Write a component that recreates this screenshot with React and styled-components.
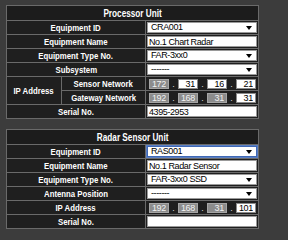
import React from 'react'
import styled, { createGlobalStyle } from 'styled-components'

const GlobalStyle = createGlobalStyle`
  body {
    margin: 0;
    background: #3c3c3c;
    font-family: 'Liberation Sans', Arial, sans-serif;
  }
`

const Page = styled.div`
  display: flex;
  flex-direction: column;
  gap: 10px;
  padding: 5px 6px;
`

const UnitTable = styled.table`
  width: 252px;
  border-collapse: collapse;
  table-layout: fixed;
  background: #1f1f1f;

  td, th {
    border: 1px solid #6a6a6a;
    height: 13px;
    padding: 0;
  }
`

const HeaderCell = styled.th`
  height: 14px !important;
  color: #fff;
  font-size: 10px;
  font-weight: bold;
  text-align: center;
  background: #1c1c1c;
`

const LabelCell = styled.td`
  color: #fff;
  font-size: 9.5px;
  font-weight: bold;
  text-align: center;
  white-space: nowrap;
`

// the screen font is a narrow face; squeeze the regular one to match
const Narrow = styled.span`
  display: inline-block;
  transform: scaleX(0.82);
`

const FieldCell = styled.td`
  padding: 0 1px !important;
`

const SelectBox = styled.div`
  display: flex;
  align-items: center;
  justify-content: space-between;
  box-sizing: border-box;
  height: 11px;
  padding: 0 4px 0 3px;
  background: #fff;
  border: 1px solid ${p => (p.$focused ? '#3f68b5' : '#9a9a9a')};
  box-shadow: ${p => (p.$focused ? '0 0 0 1px #5a7fc4' : 'none')};
  color: #000;
  font-size: 9px;
  line-height: 9px;
  letter-spacing: -0.4px;
`

const Caret = styled.span`
  width: 0;
  height: 0;
  border-left: 3px solid transparent;
  border-right: 3px solid transparent;
  border-top: 4px solid #000;
`

const TextBox = styled.input`
  display: block;
  box-sizing: border-box;
  width: 100%;
  height: 11px;
  margin: 0;
  padding: 0 1px;
  border: 1px solid #9a9a9a;
  background: #fff;
  color: #000;
  font-family: inherit;
  font-size: 9px;
  letter-spacing: -0.4px;
  outline: none;
`

const IpGroup = styled.div`
  display: flex;
  align-items: center;
  padding: 0 1px 0 2px;
`

const Octet = styled.input`
  box-sizing: border-box;
  width: 20px;
  height: 10px;
  margin: 0;
  padding: 0 2px 0 0;
  text-align: right;
  font-family: inherit;
  font-size: 9px;
  letter-spacing: -0.3px;
  outline: none;
  background: ${p => (p.disabled ? '#8c8c8c' : '#fff')};
  color: ${p => (p.disabled ? '#f2f2f2' : '#000')};
  border: 1px solid ${p => (p.disabled ? '#a6a6a6' : '#8a8a8a')};
`

const Dot = styled.span`
  width: 9px;
  text-align: center;
  color: #ddd;
  font-size: 9px;
  line-height: 10px;
`

const Select = ({ value, focused }) => (
  <SelectBox $focused={focused}>
    <span>{value}</span>
    <Caret />
  </SelectBox>
)

const IpField = ({ octets, editable }) => (
  <IpGroup>
    {octets.map((o, i) => (
      <React.Fragment key={i}>
        {i > 0 && <Dot>.</Dot>}
        <Octet readOnly value={o} disabled={!editable.includes(i)} />
      </React.Fragment>
    ))}
  </IpGroup>
)

const Label = ({ children, ...rest }) => (
  <LabelCell {...rest}><Narrow>{children}</Narrow></LabelCell>
)

const Cols = () => (
  <colgroup>
    <col style={{ width: 55 }} />
    <col style={{ width: 84 }} />
    <col style={{ width: 113 }} />
  </colgroup>
)

const App = () => (
  <Page>
    <GlobalStyle />
    <UnitTable>
      <Cols />
      <tbody>
        <tr><HeaderCell colSpan={3}><Narrow>Processor Unit</Narrow></HeaderCell></tr>
        <tr>
          <Label colSpan={2}>Equipment ID</Label>
          <FieldCell><Select value="CRA001" /></FieldCell>
        </tr>
        <tr>
          <Label colSpan={2}>Equipment Name</Label>
          <FieldCell><TextBox readOnly value="No.1 Chart Radar" /></FieldCell>
        </tr>
        <tr>
          <Label colSpan={2}>Equipment Type No.</Label>
          <FieldCell><Select value="FAR-3xx0" /></FieldCell>
        </tr>
        <tr>
          <Label colSpan={2}>Subsystem</Label>
          <FieldCell><Select value="-------" /></FieldCell>
        </tr>
        <tr>
          <Label rowSpan={2}>IP Address</Label>
          <Label>Sensor Network</Label>
          <FieldCell><IpField octets={['172', '31', '16', '21']} editable={[1, 2, 3]} /></FieldCell>
        </tr>
        <tr>
          <Label>Gateway Network</Label>
          <FieldCell><IpField octets={['192', '168', '31', '31']} editable={[3]} /></FieldCell>
        </tr>
        <tr>
          <Label colSpan={2}>Serial No.</Label>
          <FieldCell><TextBox readOnly value="4395-2953" /></FieldCell>
        </tr>
      </tbody>
    </UnitTable>

    <UnitTable>
      <Cols />
      <tbody>
        <tr><HeaderCell colSpan={3}><Narrow>Radar Sensor Unit</Narrow></HeaderCell></tr>
        <tr>
          <Label colSpan={2}>Equipment ID</Label>
          <FieldCell><Select value="RAS001" focused /></FieldCell>
        </tr>
        <tr>
          <Label colSpan={2}>Equipment Name</Label>
          <FieldCell><TextBox readOnly value="No.1 Radar Sensor" /></FieldCell>
        </tr>
        <tr>
          <Label colSpan={2}>Equipment Type No.</Label>
          <FieldCell><Select value="FAR-3xx0 SSD" /></FieldCell>
        </tr>
        <tr>
          <Label colSpan={2}>Antenna Position</Label>
          <FieldCell><Select value="-------" /></FieldCell>
        </tr>
        <tr>
          <Label colSpan={2}>IP Address</Label>
          <FieldCell><IpField octets={['192', '168', '31', '101']} editable={[3]} /></FieldCell>
        </tr>
        <tr>
          <Label colSpan={2}>Serial No.</Label>
          <FieldCell><TextBox readOnly value="" /></FieldCell>
        </tr>
      </tbody>
    </UnitTable>
  </Page>
)

export default App
